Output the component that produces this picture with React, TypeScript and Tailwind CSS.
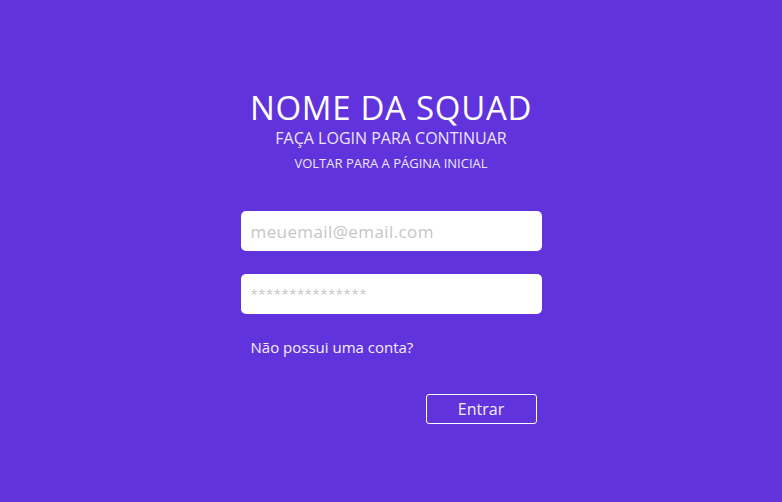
export default function App() {
  return (
    <div
      className="w-full h-[502px] bg-[#6133dc] text-white flex justify-center"
      style={{ fontFamily: '"Open Sans", sans-serif' }}
    >
      <div className="w-[301px] flex flex-col pt-[90px]">
        <h1 className="text-center text-[33px] leading-[36px] tracking-[0.7px] whitespace-nowrap">
          NOME DA SQUAD
        </h1>
        <p className="text-center text-[16px] leading-[20px] mt-[2px] text-[#ece6fb] whitespace-nowrap">
          FAÇA LOGIN PARA CONTINUAR
        </p>
        <a className="text-center text-[13px] leading-[16px] mt-[7px] text-[#ece6fb] whitespace-nowrap">
          VOLTAR PARA A PÁGINA INICIAL
        </a>

        <form className="flex flex-col mt-[40px]">
          <input
            type="email"
            placeholder="meuemail@email.com"
            className="h-[40px] w-full rounded-[5px] bg-white px-[10px] text-[17px] tracking-[0.4px] text-gray-700 placeholder:text-[#c6c6c6] outline-none"
          />
          <input
            type="password"
            placeholder="***************"
            className="h-[40px] w-full rounded-[5px] bg-white px-[10px] mt-[23px] text-[13px] text-gray-700 placeholder:text-[#c6c6c6] outline-none tracking-[0.6px]"
          />
          <a className="ml-[10px] mt-[23px] text-[15px] leading-[20px] text-[#f4f0fd]">
            Não possui uma conta?
          </a>
          <div className="flex justify-end pr-[5px] mt-[37px]">
            <button
              type="button"
              className="w-[111px] h-[30px] border border-white rounded-[3px] text-[16px] leading-[20px] text-[#f4f0fd]"
            >
              Entrar
            </button>
          </div>
        </form>
      </div>
    </div>
  );
}
